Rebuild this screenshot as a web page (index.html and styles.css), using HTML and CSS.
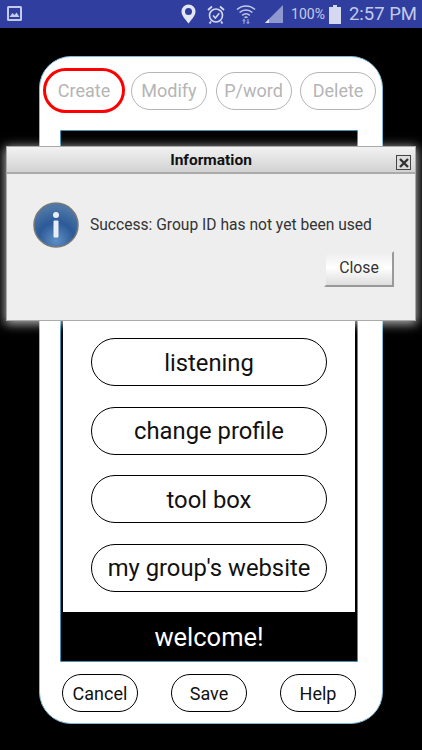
FILE: index.html
```html
<!DOCTYPE html>
<html lang="en" dir="ltr">
  <head>
    <meta name="viewport" content="width=device-width, initial-scale=1.0" />
    <meta charset="utf-8" />
    <title>Group setup</title>
    <link rel="stylesheet" href="styles.css">
  </head>
  <body>
    <div class="status-bar">
      <svg class="status-pic" width="18" height="18" viewBox="0 0 18 18">
        <rect x="1" y="1" width="15" height="15" rx="1.5" fill="#c5cae9"/>
        <rect x="3" y="3" width="11" height="11" fill="#303f9f"/>
        <path d="M3.5 12 L6.5 8 L8.5 10 L10.5 7.5 L13.5 12 Z" fill="#c5cae9"/>
      </svg>
      <div class="status-right">
        <svg width="15" height="20" viewBox="0 0 15 20">
          <path fill-rule="evenodd" d="M7.5 0.5 A7 7 0 0 1 14.5 7.5 C14.5 12 10 16 7.5 19.5 C5 16 0.5 12 0.5 7.5 A7 7 0 0 1 7.5 0.5 Z M7.5 4 A3.5 3.5 0 1 0 7.5 11 A3.5 3.5 0 1 0 7.5 4 Z" fill="#e3e6f5"/>
        </svg>
        <svg class="gap-alarm" width="18" height="19" viewBox="0 0 18 19" fill="none" stroke="#d5d9ef">
          <circle cx="9" cy="10.5" r="6.5" stroke-width="1.6"/>
          <path d="M6 10.5 L8.3 13 L12.3 8.2" stroke-width="1.5"/>
          <path d="M1 5 L5 1.5 M17 5 L13 1.5 M4 16.5 L2.5 18.5 M14 16.5 L15.5 18.5" stroke-width="1.8"/>
        </svg>
        <svg class="gap-wifi" width="20" height="20" viewBox="0 0 20 20" fill="none" stroke="#c5cae9" stroke-width="1.5">
          <path d="M1 5.5 A13 13 0 0 1 19 5.5"/>
          <path d="M3.6 8.5 A9.5 9.5 0 0 1 16.4 8.5"/>
          <path d="M6.2 11.3 A6 6 0 0 1 13.8 11.3"/>
          <path d="M8.5 13.6 A2.5 2.5 0 0 1 11.5 13.6"/>
          <path d="M8 20 V15.5 M6.7 17 L8 15.5 L9.3 17 M12 15 V19.5 M10.7 18 L12 19.5 L13.3 18" stroke="#8f99d0" stroke-width="1.2"/>
        </svg>
        <svg class="gap-signal" width="20" height="20" viewBox="0 0 20 20">
          <path d="M19 1 V19 H1 Z" fill="#8f99d0"/>
          <path d="M5 15 V19 H1 Z" fill="#e3e6f5"/>
        </svg>
        <span class="status-pct">100%</span>
        <svg class="gap-batt" width="12" height="19" viewBox="0 0 12 19">
          <path d="M4 0 H8 V2 H12 V19 H0 V2 H4 Z" fill="#d5d9ef"/>
        </svg>
        <span class="status-time">2:57 PM</span>
      </div>
    </div>

    <div class="card">
      <div class="top-row">
        <button class="pill pill-top pill-active">Create</button>
        <button class="pill pill-top">Modify</button>
        <button class="pill pill-top">P/word</button>
        <button class="pill pill-top">Delete</button>
      </div>

      <div class="panel">
        <div class="panel-list">
          <button class="pill pill-big">listening</button>
          <button class="pill pill-big">change profile</button>
          <button class="pill pill-big">tool box</button>
          <button class="pill pill-big">my group's website</button>
        </div>
        <div class="panel-footer">welcome!</div>
      </div>

      <div class="bottom-row">
        <button class="pill pill-bottom">Cancel</button>
        <button class="pill pill-bottom">Save</button>
        <button class="pill pill-bottom">Help</button>
      </div>
    </div>

    <!-- message box sits over the card -->
    <div class="dialog">
      <div class="dialog-title">
        <span>Information</span>
        <span class="dialog-x">
          <svg width="12" height="12" viewBox="0 0 12 12">
            <path d="M2 2 L10 10 M10 2 L2 10" stroke="#333" stroke-width="2.4"/>
          </svg>
        </span>
      </div>
      <div class="dialog-body">
        <div class="dialog-msg">
          <svg width="46" height="46" viewBox="0 0 46 46">
            <defs>
              <radialGradient id="infoBall" cx="50%" cy="85%" r="75%">
                <stop offset="0" stop-color="#5f8fc4"/>
                <stop offset="0.55" stop-color="#2c5a98"/>
                <stop offset="1" stop-color="#4e76a6"/>
              </radialGradient>
            </defs>
            <circle cx="23" cy="23" r="22" fill="url(#infoBall)" stroke="#777" stroke-width="1.5"/>
            <circle cx="23" cy="13" r="3" fill="#e8eef6"/>
            <rect x="20.5" y="18.5" width="5" height="17" rx="1" fill="#e8eef6"/>
          </svg>
          <span>Success: Group ID has not yet been used</span>
        </div>
        <div class="dialog-actions">
          <button class="dialog-close">Close</button>
        </div>
      </div>
    </div>
  </body>
</html>
```

FILE: styles.css
```css
* {
  box-sizing: border-box;
}

body {
  margin: 0;
  width: 422px;
  height: 750px;
  overflow: hidden;
  position: relative;
  background-color: #000;
  font-family: Roboto, sans-serif;
}

button {
  font-family: Roboto, sans-serif;
  padding: 0;
  background-color: #fff;
}

.status-bar {
  height: 28px;
  background-color: #303f9f;
  display: flex;
  align-items: center;
  justify-content: space-between;
  padding: 0 5px 0 6px;
  color: #c5cae9;
}

.status-right {
  display: flex;
  align-items: center;
}

.gap-alarm {
  margin-left: 11px;
}

.gap-wifi {
  margin-left: 11px;
}

.gap-signal {
  margin-left: 8px;
}

.status-pct {
  font-size: 14px;
  margin-left: 7px;
}

.gap-batt {
  margin-left: 4px;
}

.status-time {
  font-size: 18.5px;
  margin-left: 8px;
}

.card {
  width: 344px;
  height: 668px;
  margin: 28px 0 0 39px;
  padding: 11px 0 0 3px;
  background-color: #fff;
  border: 1px solid #7fb8d6;
  border-radius: 32px;
}

.pill {
  border-radius: 20px;
  border: 1px solid #000;
  color: #111;
}

.top-row {
  display: flex;
  align-items: center;
  gap: 8.5px;
  height: 45px;
}

.pill-top {
  width: 76px;
  height: 38px;
  font-size: 18px;
  color: #b5b5b5;
  border-color: #b5b5b5;
}

.pill-active {
  width: 82px;
  height: 45px;
  border-radius: 23px;
  border: 3px solid #f00;
  margin-right: -2.5px;
}

.panel {
  width: 298px;
  height: 532px;
  margin: 17px 0 0 17px;
  border: 3px solid #000;
  border-top-width: 40px;
  outline: 1px solid #3f8fb8;
  outline-offset: -1px;
  border-radius: 2px;
  display: flex;
  flex-direction: column;
}

.panel-list {
  flex: 1;
  display: flex;
  flex-direction: column;
  align-items: center;
  justify-content: flex-end;
  gap: 20.5px;
  padding-bottom: 20.5px;
}

.pill-big {
  width: 236px;
  height: 48px;
  border-radius: 24px;
  padding-top: 1px;
  font-size: 23.8px;
}

.panel-footer {
  height: 47px;
  background-color: #000;
  color: #fff;
  font-size: 25.5px;
  text-align: center;
  line-height: 50px;
}

.bottom-row {
  display: flex;
  justify-content: space-between;
  width: 294px;
  margin: 12px 0 0 19px;
}

.pill-bottom {
  width: 76px;
  height: 38px;
  font-size: 18px;
}

.dialog {
  position: absolute;
  left: 6px;
  top: 146px;
  width: 410px;
  height: 175px;
  background-color: #eee;
  border: 1px solid #aaa;
  box-shadow: 0 2px 10px 1px rgba(255, 255, 255, 0.7);
}

.dialog-title {
  position: relative;
  height: 27px;
  background: linear-gradient(#f2f2f2, #d2d2d2);
  border-bottom: 2px solid #aaa;
  display: flex;
  align-items: center;
  justify-content: center;
  font-size: 15.5px;
  font-weight: bold;
  color: #111;
}

.dialog-x {
  position: absolute;
  right: 4px;
  top: 8px;
  width: 15px;
  height: 15px;
  border: 1px solid #444;
  background-color: #ddd;
  display: flex;
  align-items: center;
  justify-content: center;
}

.dialog-body {
  padding: 28px 21px 0 26px;
}

.dialog-msg {
  display: flex;
  align-items: center;
  gap: 11px;
  font-size: 15.6px;
  color: #333;
}

.dialog-actions {
  display: flex;
  justify-content: flex-end;
  margin-top: 3px;
}

.dialog-close {
  width: 70px;
  height: 36px;
  padding-bottom: 3px;
  font-size: 15.8px;
  color: #333;
  border: 2px solid;
  border-color: #eee #999 #999 #eee;
  background: linear-gradient(#eee, #fff 45%, #ddd);
}
```
